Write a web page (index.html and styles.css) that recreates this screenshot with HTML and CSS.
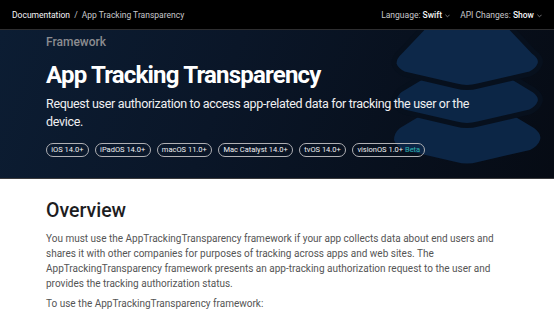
FILE: index.html
```html
<!DOCTYPE html>
<html lang="en">
<head>
<meta charset="UTF-8">
<meta name="viewport" content="width=device-width, initial-scale=1.0">
<title>App Tracking Transparency</title>
<link rel="stylesheet" href="styles.css">
</head>
<body>
<div class="navbar">
  <div class="crumbs">
    <span class="crumb-root">Documentation</span>
    <span class="crumb-sep">/</span>
    <span class="crumb-page">App Tracking Transparency</span>
  </div>
  <div class="nav-options">
    <span class="option">Language: <b>Swift</b>
      <svg class="chev" viewBox="0 0 6 4"><polyline points="0.5,0.5 3,3 5.5,0.5"/></svg>
    </span>
    <span class="option">API Changes: <b>Show</b>
      <svg class="chev" viewBox="0 0 6 4"><polyline points="0.5,0.5 3,3 5.5,0.5"/></svg>
    </span>
  </div>
</div>

<div class="hero">
  <!-- stacked layers artwork -->
  <svg class="hero-icon" viewBox="380 30 174 148" aria-hidden="true">
    <path d="M400 128 L440 104 L494 104 L534 128 Q542 134 540 140 Q538 146 530 150 L478 162 Q467 165 456 162 L404 150 Q396 146 394 140 Q394 133 400 128 Z" fill="#0c2646"/>
    <path d="M400 90 L440 66 L494 66 L534 90 Q542 96 540 102 Q538 108 530 112 L478 124 Q467 127 456 124 L404 112 Q396 108 394 102 Q394 95 400 90 Z" fill="#0c2646" stroke="#07101d" stroke-width="5"/>
    <path d="M400 52 L440 10 L494 10 L534 52 Q542 58 540 64 Q538 70 530 74 L478 86 Q467 89 456 86 L404 74 Q396 70 394 64 Q394 57 400 52 Z" fill="#0d2849" stroke="#07101d" stroke-width="5"/>
  </svg>
  <div class="hero-inner">
    <div class="eyebrow">Framework</div>
    <h1 class="title">App Tracking Transparency</h1>
    <p class="abstract">Request user authorization to access app-related data for tracking the user or the device.</p>
    <div class="platforms">
      <span class="pill">iOS 14.0+</span>
      <span class="pill">iPadOS 14.0+</span>
      <span class="pill">macOS 11.0+</span>
      <span class="pill">Mac Catalyst 14.0+</span>
      <span class="pill">tvOS 14.0+</span>
      <span class="pill">visionOS 1.0+ <span class="beta">Beta</span></span>
    </div>
  </div>
</div>

<div class="content">
  <h2 class="section-title">Overview</h2>
  <p>You must use the AppTrackingTransparency framework if your app collects data about end users and shares it with other companies for purposes of tracking across apps and web sites. The AppTrackingTransparency framework presents an app-tracking authorization request to the user and provides the tracking authorization status.</p>
  <p class="next">To use the AppTrackingTransparency framework:</p>
</div>
</body>
</html>
```

FILE: styles.css
```css
body {
  font-family: Roboto, "Noto Sans", sans-serif;
  background-color: #fff;
  margin: 0;
  padding: 0;
  overflow: hidden;
}
.navbar {
  height: 29px;
  background-color: #000;
  border-bottom: 1px solid #2e2e30;
  display: flex;
  align-items: center;
  justify-content: space-between;
  padding: 0 12px;
  font-size: 8.5px;
  color: #c8c8cc;
}
.crumb-root {
  color: #f5f5f7;
}
.crumb-sep {
  margin: 0 2px;
}
.nav-options {
  display: flex;
  gap: 10px;
}
.option b {
  color: #f5f5f7;
  font-weight: 500;
}
.chev {
  width: 5px;
  height: 4px;
  margin-left: 1px;
  fill: none;
  stroke: #9a9a9e;
  stroke-width: 0.9;
}
.hero {
  position: relative;
  height: 148px;
  background: linear-gradient(110deg, #0c1d33 0%, #0a1628 40%, #060b14 100%);
  border-bottom: 1px solid #3a3a3c;
  overflow: hidden;
}
.hero-icon {
  position: absolute;
  left: 380px;
  top: 0;
  width: 174px;
  height: 148px;
}
.hero-inner {
  position: relative;
  padding: 5px 46px 0;
  color: #fff;
}
.eyebrow {
  font-size: 12px;
  font-weight: 500;
  color: #8c8c90;
  line-height: 14px;
}
.title {
  margin: 12px 0 0;
  font-size: 24px;
  font-weight: 700;
  line-height: 28px;
  letter-spacing: -0.8px;
}
.abstract {
  margin: 6px 0 0;
  font-size: 12.5px;
  line-height: 18px;
  letter-spacing: -0.32px;
  color: #f0f0f2;
}
.platforms {
  display: flex;
  gap: 6px;
  margin-top: 12px;
}
.pill {
  border: 1px solid #b0b0b4;
  border-radius: 8px;
  font-size: 7.5px;
  line-height: 12px;
  padding: 0 4.3px;
  color: #f0f0f2;
}
.beta {
  color: #2fb4b0;
}
.content {
  padding: 19px 46px 0;
  max-width: 460px;
}
.section-title {
  margin: 0;
  font-size: 19.5px;
  font-weight: 500;
  color: #1d1d1f;
  line-height: 26px;
}
.content p {
  margin: 7px 0 0;
  font-size: 10px;
  line-height: 15px;
  color: #555;
}
.content p.next {
  margin-top: 5px;
}
```
